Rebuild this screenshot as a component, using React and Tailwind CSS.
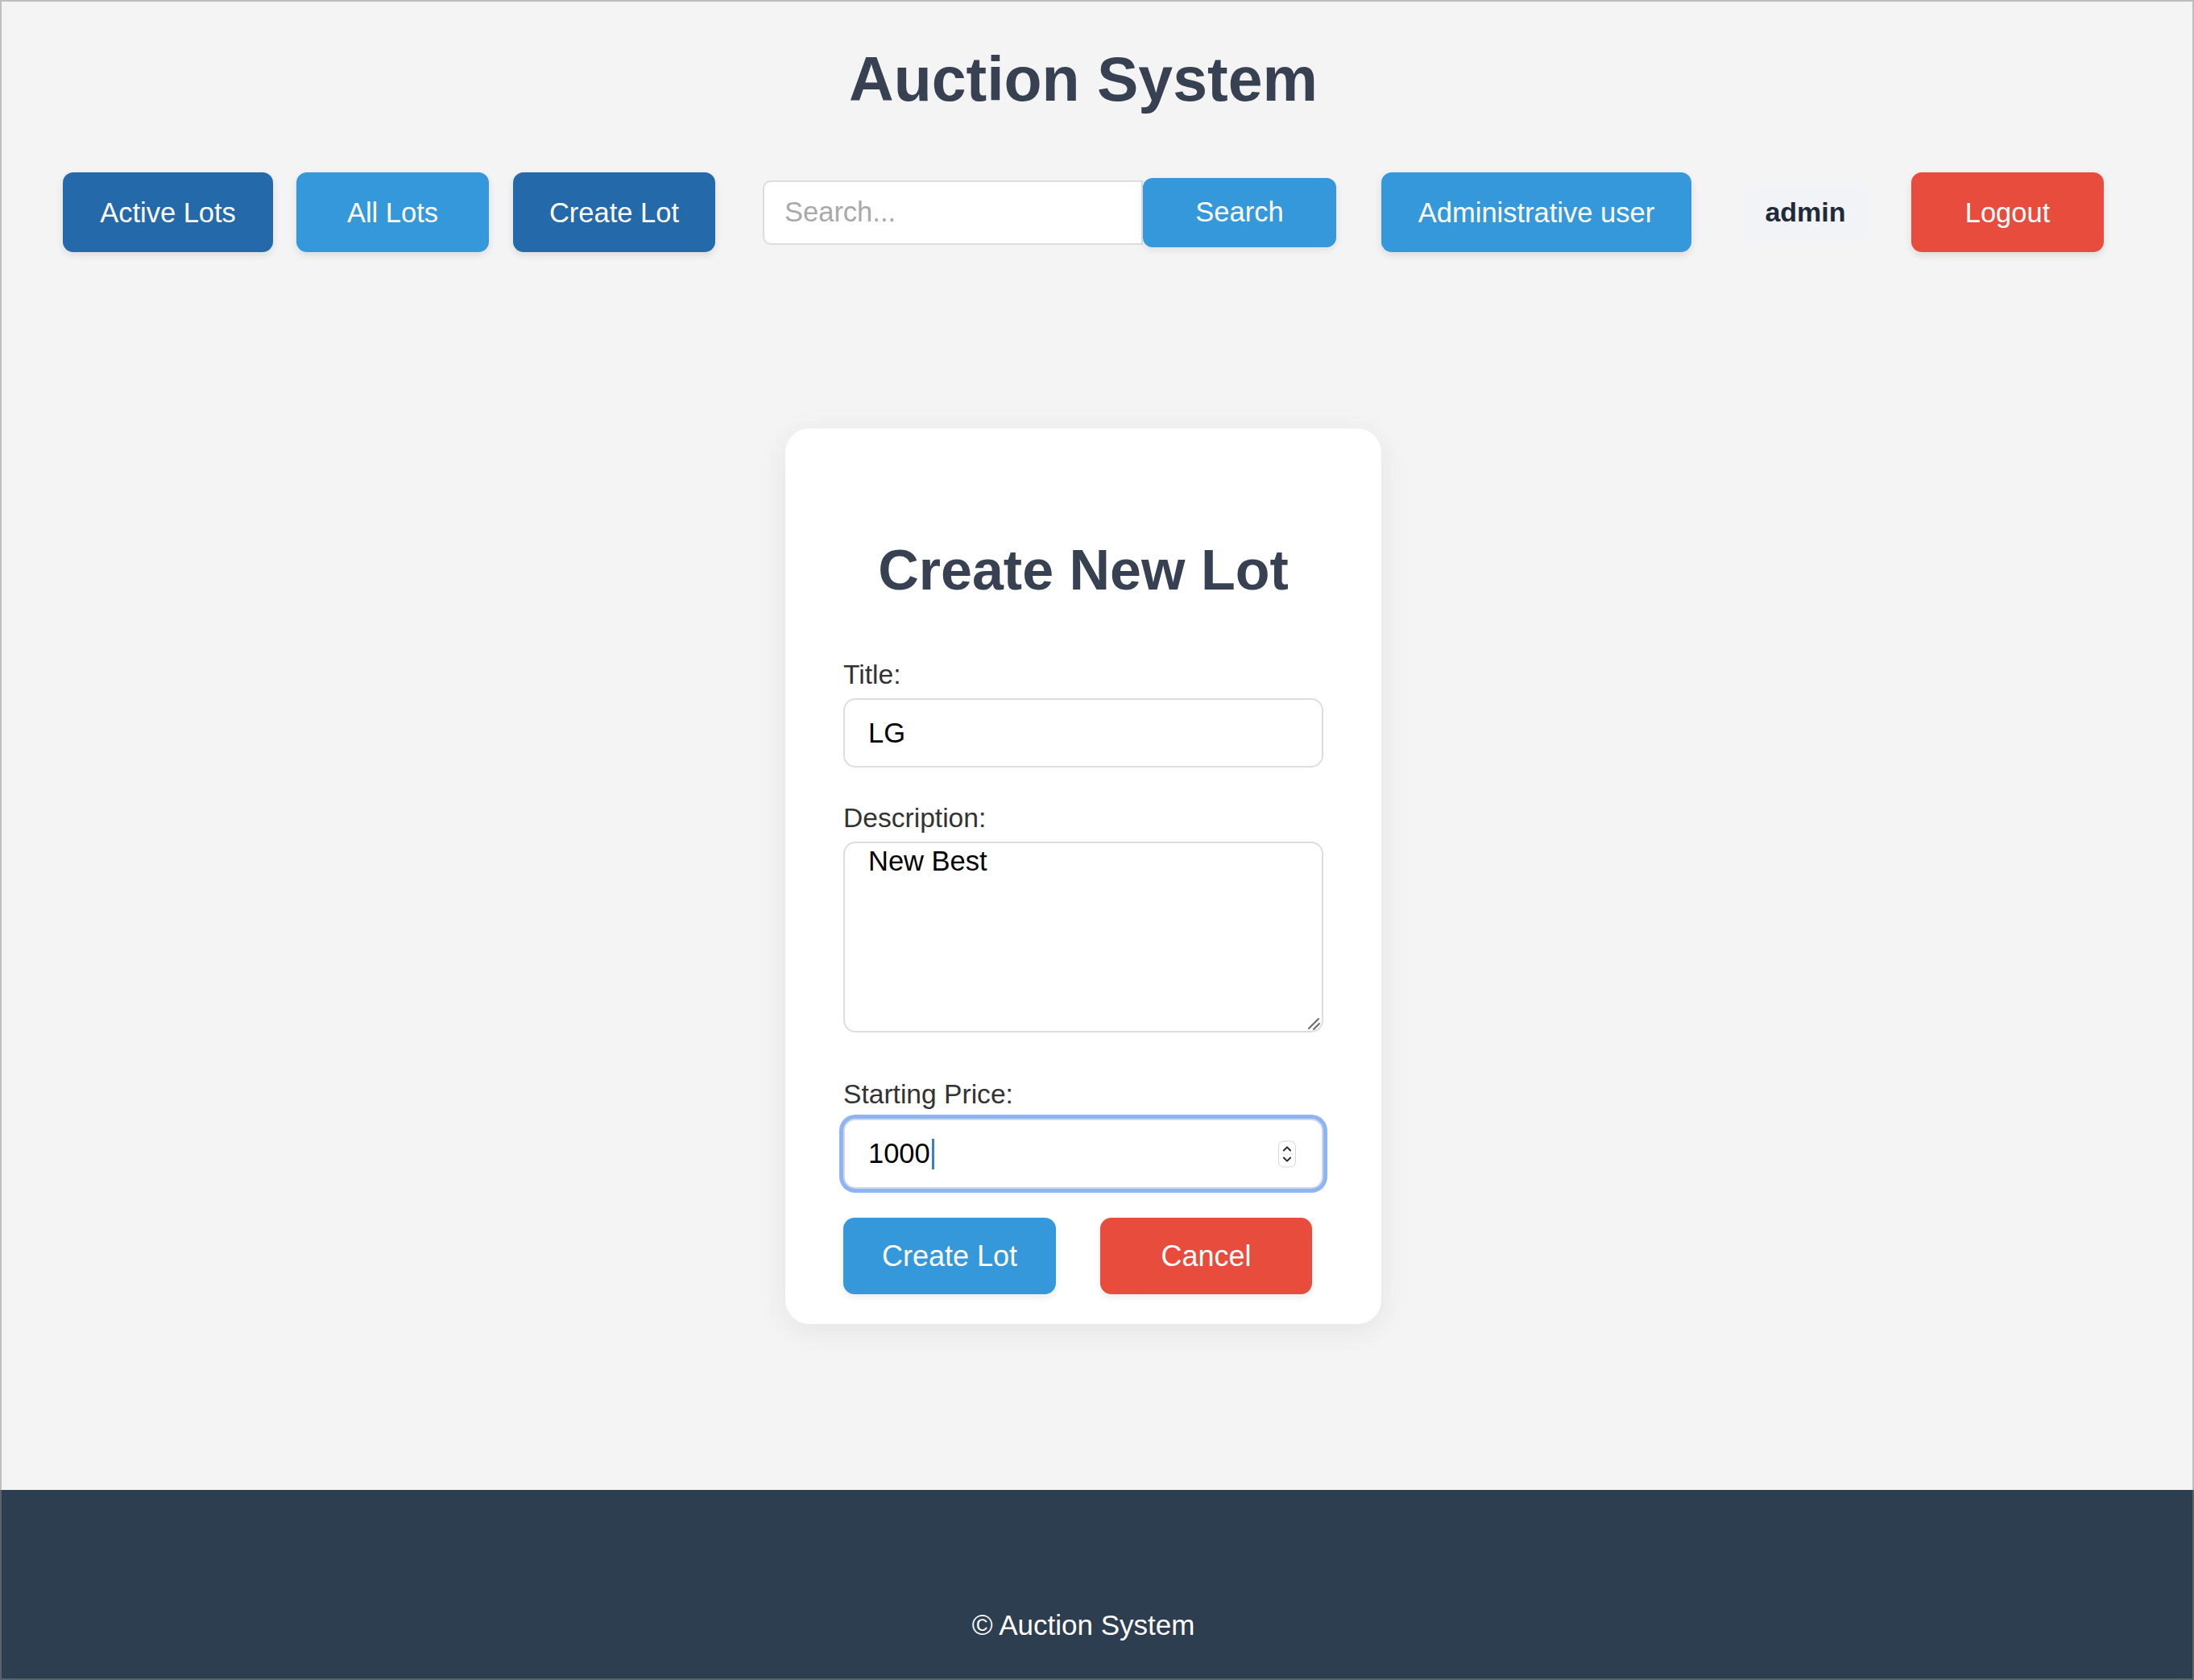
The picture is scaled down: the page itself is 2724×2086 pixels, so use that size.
import React, { useState } from 'react';

const NavButton = ({ label, className }) => (
  <button
    className={`h-[99px] shrink-0 rounded-[13px] text-[34.5px] leading-[40px] text-white shadow-[0_4px_10px_rgba(0,0,0,0.1)] ${className}`}
  >
    {label}
  </button>
);

const Spinner = () => (
  <div className="absolute right-[34px] top-1/2 flex h-[33px] w-[22px] -translate-y-1/2 flex-col overflow-hidden rounded-[7px] border border-[#d6d6d6] bg-white">
    <svg viewBox="0 0 22 33" className="h-full w-full">
      <line x1="2" y1="16.5" x2="20" y2="16.5" stroke="#e3e3e3" strokeWidth="1" />
      <path d="M6.5 11.5 L11 7 L15.5 11.5" fill="none" stroke="#2b2b2b" strokeWidth="2.2" strokeLinecap="round" strokeLinejoin="round" />
      <path d="M6.5 21.5 L11 26 L15.5 21.5" fill="none" stroke="#2b2b2b" strokeWidth="2.2" strokeLinecap="round" strokeLinejoin="round" />
    </svg>
  </div>
);

// resize grip drawn over the textarea corner
const ResizeGrip = () => (
  <svg viewBox="0 0 18 18" className="pointer-events-none absolute bottom-[2px] right-[2px] h-[18px] w-[18px]">
    <line x1="2" y1="15" x2="14" y2="3" stroke="#6a6a6a" strokeWidth="2" strokeLinecap="round" />
    <line x1="8" y1="16" x2="15" y2="9" stroke="#6a6a6a" strokeWidth="2" strokeLinecap="round" />
  </svg>
);

const App = () => {
  const [query, setQuery] = useState('');
  const [title, setTitle] = useState('LG');
  const [description, setDescription] = useState('New Best');
  const [price, setPrice] = useState('1000');

  return (
    <div className="flex min-h-[2086px] flex-col bg-[#f4f4f4] font-['Liberation_Sans',Arial,sans-serif]">
      <main className="flex-1 border-x-2 border-t-2 border-[#bdbdbd] pr-[34px]">
        <h1 className="mt-[52px] text-center text-[77px] font-bold leading-[88px] text-[#374151]">Auction System</h1>

        <nav className="mt-[72px] flex items-center justify-center">
          <NavButton label="Active Lots" className="w-[261px] bg-[#2469aa]" />
          <NavButton label="All Lots" className="ml-[29px] w-[239px] bg-[#3498db]" />
          <NavButton label="Create Lot" className="ml-[30px] w-[251px] bg-[#2469aa]" />
          <form className="ml-[59px] flex shrink-0 items-center" onSubmit={(e) => e.preventDefault()}>
            <input
              type="text"
              value={query}
              placeholder="Search..."
              onChange={(e) => setQuery(e.target.value)}
              className="h-[80px] w-[472px] rounded-l-[10px] border-2 border-[#dddddd] bg-white pl-[25px] text-[34.5px] text-black outline-none placeholder:text-[#a9a9a9]"
            />
            <button className="h-[86px] w-[240px] rounded-[12px] bg-[#3498db] text-[34.5px] text-white shadow-[0_4px_10px_rgba(0,0,0,0.08)]">
              Search
            </button>
          </form>
          <NavButton label="Administrative user" className="ml-[56px] w-[385px] bg-[#3498db]" />
          <span className="ml-[63px] flex h-[77px] w-[157px] shrink-0 items-center justify-center rounded-[16px] bg-[#f1f3f6] text-[34px] font-bold text-[#1f2a3a]">
            admin
          </span>
          <NavButton label="Logout" className="ml-[53px] w-[239px] bg-[#e74c3c]" />
        </nav>

        <div className="mt-[219px] flex justify-center">
          <form
            className="w-[740px] rounded-[30px] bg-white px-[72px] pb-[37px] pt-[136px] shadow-[0_8px_40px_rgba(0,0,0,0.07)]"
            onSubmit={(e) => e.preventDefault()}
          >
            <h2 className="text-center text-[70px] font-bold leading-[80px] text-[#374151]">Create New Lot</h2>

            <label className="mt-[70px] block text-[33.6px] leading-[40px] text-[#333333]">Title:</label>
            <input
              type="text"
              value={title}
              onChange={(e) => setTitle(e.target.value)}
              className="mt-[9px] block h-[86px] w-full rounded-[15px] border-2 border-[#dddddd] bg-white px-[29px] text-[34.5px] text-black outline-none"
            />

            <label className="mt-[43px] block text-[33.6px] leading-[40px] text-[#333333]">Description:</label>
            <div className="relative mt-[9px]">
              <textarea
                value={description}
                onChange={(e) => setDescription(e.target.value)}
                className="block h-[237px] w-full resize-none rounded-[15px] border-2 border-[#dddddd] bg-white px-[29px] pt-[2px] text-[34.5px] leading-[40px] text-black outline-none"
              />
              <ResizeGrip />
            </div>

            <label className="mt-[57px] block text-[33.6px] leading-[40px] text-[#333333]">Starting Price:</label>
            <div className="relative mt-[10px]">
              <input
                type="text"
                value={price}
                onChange={(e) => setPrice(e.target.value)}
                className="block h-[87px] w-full rounded-[15px] border-2 border-[#d3d9e4] bg-white px-[29px] text-[34.5px] text-black outline-none ring-[5px] ring-[#8db4f5]"
              />
              <span className="absolute left-[110px] top-[25px] h-[38px] w-[3px] bg-[#3a7be0]" />
              <Spinner />
            </div>

            <div className="mt-[36px] flex gap-[55px]">
              <button className="h-[95px] w-[264px] rounded-[14px] bg-[#3498db] text-[36px] text-white shadow-[0_4px_10px_rgba(0,0,0,0.08)]">
                Create Lot
              </button>
              <button className="h-[95px] w-[263px] rounded-[14px] bg-[#e74c3c] text-[36px] text-white shadow-[0_4px_10px_rgba(0,0,0,0.08)]">
                Cancel
              </button>
            </div>
          </form>
        </div>
      </main>

      <footer className="h-[236px] border-x-2 border-b-2 border-[#5a636c] bg-[#2d3e50] pr-[34px] pt-[148px] text-center text-[35px] leading-[40px] text-white">
        © Auction System
      </footer>
    </div>
  );
};

export default App;
